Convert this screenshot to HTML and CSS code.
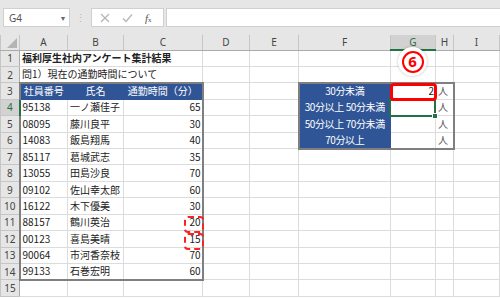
FILE: index.html
```html
<!DOCTYPE html>
<html>
<head>
    <title>福利厚生社内アンケート集計結果</title>
    <link rel="stylesheet" href="styles.css">
</head>
<body>
    <!-- Formula bar -->
    <div class="formula-bar">
        <div class="name-box"><span>G4</span><span class="caret">&#9662;</span></div>
        <div class="grip">&#8942;</div>
        <div class="fx-box">
            <svg class="tool" width="10" height="10" viewBox="0 0 10 10"><path d="M1 1L9 9M9 1L1 9" stroke="#b4b4b4" stroke-width="1.2" fill="none"/></svg>
            <svg class="tool" width="11" height="10" viewBox="0 0 11 10"><path d="M1 5.5L4 8.5L10 1.5" stroke="#b4b4b4" stroke-width="1.2" fill="none"/></svg>
            <span class="fx"><i>f</i><small>x</small></span>
        </div>
        <div class="formula-input"></div>
    </div>

    <!-- Sheet -->
    <div class="sheet-wrap">
        <table class="sheet">
            <colgroup>
                <col class="c-rh">
                <col class="c-a">
                <col class="c-b">
                <col class="c-c">
                <col class="c-d">
                <col class="c-e">
                <col class="c-f">
                <col class="c-g">
                <col class="c-h">
                <col>
            </colgroup>
            <thead>
                <tr>
                    <th class="corner"><span class="tri"></span></th>
                    <th>A</th><th>B</th><th>C</th><th>D</th><th>E</th><th>F</th>
                    <th class="col-sel">G</th><th>H</th><th>I</th>
                </tr>
            </thead>
            <tbody>
                <tr>
                    <td class="rh">1</td>
                    <td colspan="3" class="title">福利厚生社内アンケート集計結果</td>
                    <td></td><td></td><td></td><td></td><td></td><td></td>
                </tr>
                <tr>
                    <td class="rh">2</td>
                    <td colspan="3">問1）現在の通勤時間について</td>
                    <td></td><td></td><td></td><td></td><td></td><td></td>
                </tr>
                <tr>
                    <td class="rh">3</td>
                    <td class="head t-top t-left">社員番号</td>
                    <td class="head t-top">氏名</td>
                    <td class="head t-top t-right">通勤時間（分）</td>
                    <td></td><td></td>
                    <td class="band t-top t-left">30分未満</td>
                    <td class="num t-top">2</td>
                    <td class="unit t-top t-right">人</td>
                    <td></td>
                </tr>
                <tr>
                    <td class="rh row-sel">4</td>
                    <td class="t-left">95138</td><td>一ノ瀬佳子</td><td class="num t-right">65</td>
                    <td></td><td></td>
                    <td class="band t-left">30分以上 50分未満</td>
                    <td class="num"></td>
                    <td class="unit t-right">人</td>
                    <td></td>
                </tr>
                <tr>
                    <td class="rh">5</td>
                    <td class="t-left">08095</td><td>藤川良平</td><td class="num t-right">30</td>
                    <td></td><td></td>
                    <td class="band t-left">50分以上 70分未満</td>
                    <td class="num"></td>
                    <td class="unit t-right">人</td>
                    <td></td>
                </tr>
                <tr>
                    <td class="rh">6</td>
                    <td class="t-left">14083</td><td>飯島翔馬</td><td class="num t-right">40</td>
                    <td></td><td></td>
                    <td class="band t-left t-bottom">70分以上</td>
                    <td class="num t-bottom"></td>
                    <td class="unit t-right t-bottom">人</td>
                    <td></td>
                </tr>
                <tr>
                    <td class="rh">7</td>
                    <td class="t-left">85117</td><td>葛城武志</td><td class="num t-right">35</td>
                    <td></td><td></td><td></td><td></td><td></td><td></td>
                </tr>
                <tr>
                    <td class="rh">8</td>
                    <td class="t-left">13055</td><td>田島沙良</td><td class="num t-right">70</td>
                    <td></td><td></td><td></td><td></td><td></td><td></td>
                </tr>
                <tr>
                    <td class="rh">9</td>
                    <td class="t-left">09102</td><td>佐山幸太郎</td><td class="num t-right">60</td>
                    <td></td><td></td><td></td><td></td><td></td><td></td>
                </tr>
                <tr>
                    <td class="rh">10</td>
                    <td class="t-left">16122</td><td>木下優美</td><td class="num t-right">30</td>
                    <td></td><td></td><td></td><td></td><td></td><td></td>
                </tr>
                <tr>
                    <td class="rh">11</td>
                    <td class="t-left">88157</td><td>鶴川英治</td><td class="num t-right">20</td>
                    <td></td><td></td><td></td><td></td><td></td><td></td>
                </tr>
                <tr>
                    <td class="rh">12</td>
                    <td class="t-left">00123</td><td>喜島美晴</td><td class="num t-right">15</td>
                    <td></td><td></td><td></td><td></td><td></td><td></td>
                </tr>
                <tr>
                    <td class="rh">13</td>
                    <td class="t-left">90064</td><td>市河香奈枝</td><td class="num t-right">70</td>
                    <td></td><td></td><td></td><td></td><td></td><td></td>
                </tr>
                <tr>
                    <td class="rh">14</td>
                    <td class="t-left t-bottom">99133</td><td class="t-bottom">石巻宏明</td><td class="num t-right t-bottom">60</td>
                    <td></td><td></td><td></td><td></td><td></td><td></td>
                </tr>
                <tr>
                    <td class="rh">15</td>
                    <td></td><td></td><td></td><td></td><td></td><td></td><td></td><td></td><td></td>
                </tr>
            </tbody>
        </table>

        <!-- Annotations over the sheet -->
        <div class="sel-box"><span class="handle"></span></div>
        <div class="mark-box"></div>
        <div class="dash-box dash-20"></div>
        <div class="dash-box dash-15"></div>
        <div class="badge"><span class="ring">6</span></div>
    </div>
</body>
</html>
```

FILE: styles.css
```css
* {
    margin: 0;
    padding: 0;
    box-sizing: border-box;
}
body {
    width: 500px;
    height: 298px;
    overflow: hidden;
    background-color: #fff;
    font-family: "Noto Sans CJK JP", "Noto Sans", sans-serif;
}

/* formula bar */
.formula-bar {
    height: 35px;
    background-color: #e6e6e6;
    display: flex;
    align-items: flex-start;
    padding-top: 8px;
}
.name-box {
    width: 67px;
    height: 19px;
    margin-left: 3px;
    background-color: #fff;
    border: 1px solid #d0d0d0;
    display: flex;
    align-items: center;
    justify-content: space-between;
    padding: 0 4px 0 5px;
    font-family: "Noto Sans", sans-serif;
    font-size: 10px;
    color: #555;
}
.caret {
    font-size: 8px;
    color: #666;
}
.grip {
    width: 21px;
    height: 19px;
    text-align: center;
    line-height: 19px;
    font-size: 11px;
    color: #b8b8b8;
}
.fx-box {
    width: 73px;
    height: 19px;
    background-color: #fff;
    border: 1px solid #d0d0d0;
    display: flex;
    align-items: center;
    gap: 12px;
    padding-left: 8px;
}
.fx {
    font-family: "Liberation Serif", serif;
    font-size: 11px;
    color: #555;
}
.fx small {
    font-size: 7px;
}
.formula-input {
    flex: 1;
    height: 19px;
    margin-left: 2px;
    background-color: #fff;
    border: 1px solid #d0d0d0;
    border-right: none;
}

/* sheet grid */
.sheet-wrap {
    position: relative;
}
.sheet {
    width: 500px;
    border-collapse: collapse;
    table-layout: fixed;
    font-size: 10px;
    color: #222;
}
.c-rh { width: 19px; }
.c-a { width: 48px; }
.c-b { width: 56px; }
.c-c { width: 79px; }
.c-d { width: 47px; }
.c-e { width: 49px; }
.c-f { width: 92px; }
.c-g { width: 45px; }
.c-h { width: 18px; }

.sheet th,
.sheet td {
    border: 1px solid #dcdcdc;
    padding: 0 2px;
    line-height: 14px;
    white-space: nowrap;
    overflow: visible;
    text-align: left;
    vertical-align: middle;
}
.sheet thead tr {
    height: 15px;
}
.sheet tbody tr {
    height: 16.43px;
}
.sheet thead th {
    background-color: #e6e6e6;
    border-color: #c6c6c6;
    border-top: none;
    border-bottom-color: #ababab;
    font-family: "Noto Sans", sans-serif;
    font-weight: normal;
    font-size: 10px;
    color: #444;
    text-align: center;
    line-height: 13px;
}
.sheet thead th.col-sel {
    background-color: #d2d2d2;
    color: #2f6e45;
    border-bottom: 2px solid #217346;
}
.corner {
    position: relative;
}
.tri {
    position: absolute;
    right: 2px;
    bottom: 2px;
    width: 0;
    height: 0;
    border-left: 10px solid transparent;
    border-bottom: 10px solid #b4b4b4;
}
.sheet td.rh {
    background-color: #e6e6e6;
    border-color: #c6c6c6;
    border-right-color: #ababab;
    font-family: "Noto Sans", sans-serif;
    color: #444;
    text-align: center;
    padding: 0;
}
.sheet td.row-sel {
    background-color: #d2d2d2;
    color: #217346;
    border-right: 2px solid #217346;
}
.title {
    font-weight: bold;
}
.sheet td.head {
    background-color: #2f5597;
    border-color: #2f5597;
    color: #fff;
    text-align: center;
}
.sheet td.band {
    background-color: #2f5597;
    border-color: #2f5597;
    color: #fff;
    text-align: center;
    letter-spacing: -0.4px;
}
.sheet td.num {
    text-align: right;
    padding-right: 1px;
}
.unit {
    color: #555;
}

/* table outlines */
.sheet td.t-top { border-top: 2px solid #7f7f7f; }
.sheet td.t-right { border-right: 2px solid #7f7f7f; }
.sheet td.t-bottom { border-bottom: 2px solid #7f7f7f; }
.sheet td.t-left { border-left: 2px solid #7f7f7f; }

/* annotations */
.sel-box {
    position: absolute;
    left: 389px;
    top: 64px;
    width: 47px;
    height: 18px;
    border: 2px solid #217346;
}
.handle {
    position: absolute;
    right: -4px;
    bottom: -4px;
    width: 6px;
    height: 6px;
    background-color: #217346;
    border: 1px solid #fff;
}
.mark-box {
    position: absolute;
    left: 390px;
    top: 48px;
    width: 47px;
    height: 18px;
    border: 3px solid #ff0000;
    border-radius: 4px;
}
.dash-box {
    position: absolute;
    left: 184px;
    width: 20px;
    height: 17px;
    border: 2px dashed #ff2020;
    border-radius: 4px;
}
.dash-20 { top: 181px; }
.dash-15 { top: 198px; }
.badge {
    position: absolute;
    left: 398px;
    top: 12px;
    width: 29px;
    height: 29px;
    border-radius: 50%;
    background-color: #fff;
    box-shadow: 0 0 3px rgba(0, 0, 0, 0.25);
    display: flex;
    align-items: center;
    justify-content: center;
}
.ring {
    width: 22px;
    height: 22px;
    border: 2px solid #ff0000;
    border-radius: 50%;
    display: flex;
    align-items: center;
    justify-content: center;
    font-family: "Noto Sans", sans-serif;
    font-weight: bold;
    font-size: 15px;
    line-height: 1;
    color: #ff0000;
}
```
